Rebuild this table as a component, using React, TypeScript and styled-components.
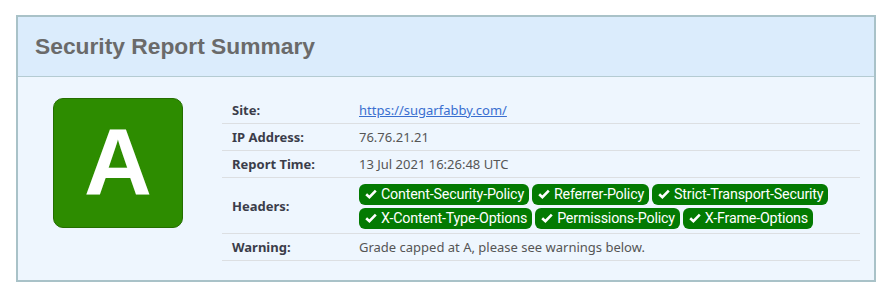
import * as React from "react";
import styled, { createGlobalStyle } from "styled-components";

const GlobalStyle = createGlobalStyle`
  body {
    margin: 0;
    background: #ffffff;
    font-family: "Noto Sans", "Open Sans", sans-serif;
  }
`;

const Panel = styled.div`
  margin: 15px 0 0 16px;
  width: 856px;
  border: 2px solid #a9c2c8;
  background: #eef6fe;
`;

const PanelHeader = styled.div`
  height: 59px;
  display: flex;
  align-items: center;
  padding-left: 17px;
  background: #dbecfc;
  border-bottom: 1px solid #b4cbd2;
`;

const Title = styled.h1`
  margin: 0;
  font-family: "Liberation Sans", Arial, sans-serif;
  font-size: 22.8px;
  font-weight: bold;
  color: #6a6a6a;
`;

const PanelBody = styled.div`
  display: flex;
  align-items: flex-start;
  padding: 20px 14px 19px 35px;
`;

const GradeBox = styled.div`
  width: 128px;
  height: 128px;
  flex-shrink: 0;
  display: flex;
  align-items: center;
  justify-content: center;
  background: #2d8c00;
  border: 1px solid #246e00;
  border-radius: 10px;
  color: #ffffff;
  font-family: "Liberation Sans", Arial, sans-serif;
  font-weight: bold;
  font-size: 94px;
  line-height: 1;
  margin-top: 1px;
`;

const Table = styled.div`
  margin-left: 39px;
  flex: 1;
`;

const Row = styled.div<{ $tall?: boolean }>`
  display: grid;
  grid-template-columns: 127px 1fr;
  align-items: center;
  min-height: ${(p) => (p.$tall ? 55 : 26)}px;
  border-bottom: 1px solid #dcdfe2;
  padding-left: 10px;
`;

const Label = styled.div`
  font-size: 13px;
  font-weight: bold;
  color: #3b3d4a;
`;

const Value = styled.div`
  font-size: 13px;
  color: #555555;
`;

const Link = styled.a`
  color: #3a6fd0;
  text-decoration: underline;
`;

const Badges = styled.div`
  display: flex;
  flex-wrap: wrap;
  gap: 3px 3px;
  width: 490px;
  padding: 4px 0 3px;
`;

const Badge = styled.span`
  display: inline-flex;
  align-items: center;
  gap: 4px;
  height: 21px;
  padding: 0 5px 0 6px;
  border-radius: 6px;
  background: #037a02;
  color: #ffffff;
  font-family: "Roboto", "Noto Sans", sans-serif;
  font-size: 14.3px;
  letter-spacing: -0.2px;
`;

const Check = () => (
  <svg width="12" height="10" viewBox="0 0 12 10">
    <path d="M1.2 5.2 L4.4 8.2 L10.8 1.6" fill="none" stroke="#fff" strokeWidth="2.6" />
  </svg>
);

const headers = [
  "Content-Security-Policy",
  "Referrer-Policy",
  "Strict-Transport-Security",
  "X-Content-Type-Options",
  "Permissions-Policy",
  "X-Frame-Options",
];

const App = () => (
  <>
    <GlobalStyle />
    <Panel>
      <PanelHeader>
        <Title>Security Report Summary</Title>
      </PanelHeader>
      <PanelBody>
        <GradeBox>A</GradeBox>
        <Table>
          <Row>
            <Label>Site:</Label>
            <Value>
              <Link href="#">https://sugarfabby.com/</Link>
            </Value>
          </Row>
          <Row>
            <Label>IP Address:</Label>
            <Value>76.76.21.21</Value>
          </Row>
          <Row>
            <Label>Report Time:</Label>
            <Value>13 Jul 2021 16:26:48 UTC</Value>
          </Row>
          <Row $tall>
            <Label>Headers:</Label>
            <Badges>
              {headers.map((h) => (
                <Badge key={h}>
                  <Check />
                  {h}
                </Badge>
              ))}
            </Badges>
          </Row>
          <Row>
            <Label>Warning:</Label>
            <Value>Grade capped at A, please see warnings below.</Value>
          </Row>
        </Table>
      </PanelBody>
    </Panel>
  </>
);

export default App;
